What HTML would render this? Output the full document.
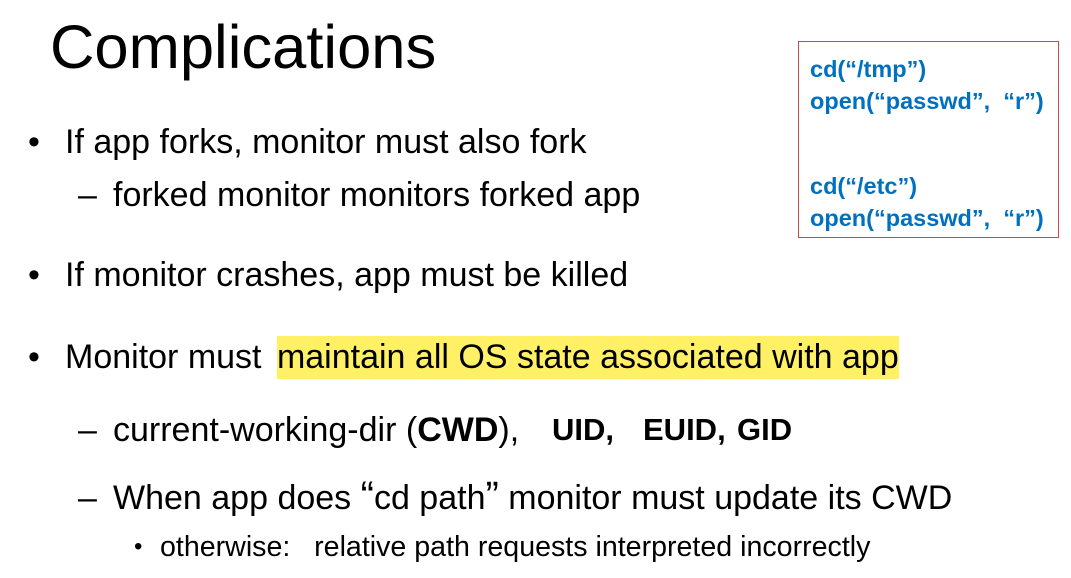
<!DOCTYPE html>
<html><head><meta charset="utf-8"><style>
body{margin:0;width:1071px;height:578px;background:#fff;overflow:hidden;position:relative;font-family:"Liberation Sans",sans-serif;color:#000}
.l{position:absolute;white-space:nowrap;font-size:34px;line-height:40px}
.t{position:absolute;left:50px;top:12px;font-size:61.5px;line-height:72px;white-space:nowrap}
.hl{background:#FFF066;padding:2px 0 3px}
.box{position:absolute;left:798px;top:41px;width:261px;height:197px;border:1.5px solid #C9494B;box-sizing:border-box}
.c{position:absolute;left:810px;font-weight:bold;color:#0070C0;font-size:23.5px;line-height:28px;white-space:nowrap}
.b{font-weight:bold;font-size:31px}
</style></head><body>
<div class="t">Complications</div>
<div class="box"></div>
<div class="c" style="top:55px">cd(“/tmp”)</div>
<div class="c" style="top:87px">open(“passwd”,&nbsp; “r”)</div>
<div class="c" style="top:172px">cd(“/etc”)</div>
<div class="c" style="top:204px">open(“passwd”,&nbsp; “r”)</div>

<div class="l" style="left:28px;top:122px">•</div>
<div class="l" style="left:65px;top:122px">If app forks, monitor must also fork</div>
<div class="l" style="left:78px;top:175px">–</div>
<div class="l" style="left:113px;top:175px">forked monitor monitors forked app</div>
<div class="l" style="left:28px;top:255px">•</div>
<div class="l" style="left:65px;top:255px">If monitor crashes, app must be killed</div>
<div class="l" style="left:28px;top:337px">•</div>
<div class="l" style="left:65px;top:337px">Monitor must <span class="hl" style="margin-left:6px">maintain all OS state associated with app</span></div>
<div class="l" style="left:78px;top:410px">–</div>
<div class="l" style="left:113px;top:410px">current-working-dir (<b>CWD</b>),</div>
<div class="l b" style="left:552px;top:410px">UID,</div>
<div class="l b" style="left:643px;top:410px">EUID,</div>
<div class="l b" style="left:737px;top:410px">GID</div>
<div class="l" style="left:78px;top:478px">–</div>
<div class="l" style="left:113px;top:478px">When app does <span style="font-size:40px;line-height:30px">“</span>cd path<span style="font-size:40px;line-height:30px">”</span> monitor must update its CWD</div>
<div class="l" style="left:134px;top:531px;font-size:24px;line-height:32px">•</div>
<div class="l" style="left:160px;top:531px;font-size:28.6px;line-height:32px">otherwise:&nbsp;&nbsp; relative path requests interpreted incorrectly</div>
</body></html>
